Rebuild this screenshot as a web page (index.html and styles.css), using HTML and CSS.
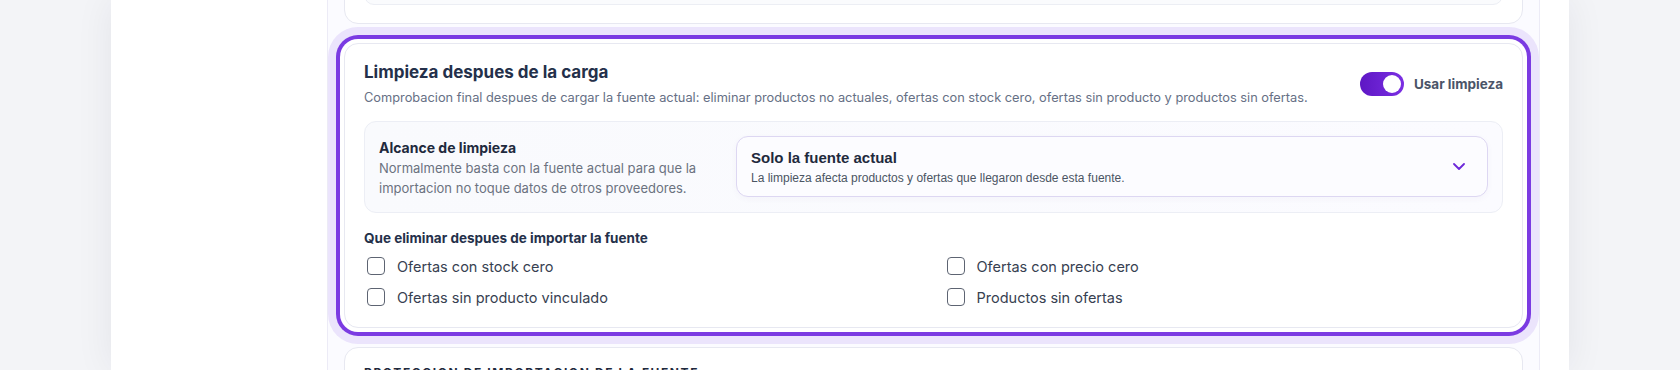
FILE: index.html
```html
<!DOCTYPE html>
<html lang="es">
  <head>
    <meta charset="UTF-8" />
    <meta name="viewport" content="width=device-width, initial-scale=1.0" />
    <title>Limpieza despues de la carga</title>
    <link rel="stylesheet" href="styles.css">
  </head>
  <body>
    <div class="panel">
      <div class="sidebar"></div>

      <div class="column">
        <div class="stack">
          <!-- tarjeta anterior, casi fuera de la vista -->
          <section class="card">
            <div class="inner-box"></div>
          </section>

          <section class="card active">
            <div class="card-head">
              <div>
                <h2 class="card-title">Limpieza despues de la carga</h2>
                <p class="card-text">Comprobacion final despues de cargar la fuente actual: eliminar productos no actuales, ofertas con stock cero, ofertas sin producto y productos sin ofertas.</p>
              </div>
              <label class="switch">
                <span class="track"><span class="knob"></span></span>
                <span class="switch-label">Usar limpieza</span>
              </label>
            </div>

            <div class="scope">
              <div class="scope-info">
                <h3>Alcance de limpieza</h3>
                <p>Normalmente basta con la fuente actual para que la importacion no toque datos de otros proveedores.</p>
              </div>
              <div class="select">
                <div>
                  <div class="select-value">Solo la fuente actual</div>
                  <div class="select-hint">La limpieza afecta productos y ofertas que llegaron desde esta fuente.</div>
                </div>
                <svg class="chevron" width="12" height="7" viewBox="0 0 12 7">
                  <path d="M1 1l5 5 5-5" fill="none" stroke="#6d28d9" stroke-width="1.8" stroke-linecap="round" stroke-linejoin="round"/>
                </svg>
              </div>
            </div>

            <h4 class="list-title">Que eliminar despues de importar la fuente</h4>
            <div class="checks">
              <label class="check"><span class="box"></span>Ofertas con stock cero</label>
              <label class="check"><span class="box"></span>Ofertas con precio cero</label>
              <label class="check"><span class="box"></span>Ofertas sin producto vinculado</label>
              <label class="check"><span class="box"></span>Productos sin ofertas</label>
            </div>
          </section>

          <section class="card">
            <h2 class="caps-title">Proteccion de importacion de la fuente</h2>
          </section>
        </div>
      </div>
    </div>
  </body>
</html>
```

FILE: styles.css
```css
* {
  margin: 0;
  padding: 0;
  box-sizing: border-box;
}
body {
  background: #f3f4f7;
  font-family: Inter, "Noto Sans", sans-serif;
  color: #1f2a3d;
  height: 370px;
  overflow: hidden;
}
.panel {
  width: 1458px;
  height: 370px;
  margin: 0 auto;
  background: #fff;
  display: flex;
  box-shadow: 0 0 36px rgba(20, 30, 60, 0.07);
}
.sidebar {
  width: 216px;
  flex-shrink: 0;
}
.column {
  width: 1213px;
  border-left: 1px solid #ecebf6;
  border-right: 1px solid #ecebf6;
  background: #fbfbff;
  padding: 0 16px;
  overflow: hidden;
}
.stack {
  display: flex;
  flex-direction: column;
  gap: 19px;
  margin-top: -76px;
}
.card {
  background: #fff;
  border: 1px solid #e7e8f1;
  border-radius: 14px;
  padding: 16px 19px 18px;
}
.inner-box {
  height: 64px;
  background: #fafbfd;
  border: 1px solid #eceef4;
  border-radius: 10px;
}
.active {
  box-shadow: 0 0 0 4px #fff, 0 0 0 8px #7b3be2, 0 0 0 16px #ebe4fc;
}
.card-head {
  display: flex;
  justify-content: space-between;
  align-items: center;
}
.card-title {
  font-size: 17px;
  line-height: 24px;
  font-weight: 700;
  color: #24304a;
}
.card-text {
  margin-top: 4px;
  font-size: 12.8px;
  line-height: 20px;
  color: #667085;
}
.switch {
  display: flex;
  align-items: center;
  gap: 10px;
}
.track {
  width: 44px;
  height: 24px;
  border-radius: 12px;
  background: linear-gradient(90deg, #5e17c4, #7b2fe3);
  display: flex;
  justify-content: flex-end;
  padding: 3px;
}
.knob {
  width: 18px;
  height: 18px;
  border-radius: 50%;
  background: #fff;
}
.switch-label {
  font-size: 13.5px;
  font-weight: 700;
  color: #4a5468;
}
.scope {
  margin-top: 13px;
  display: grid;
  grid-template-columns: 337px 1fr;
  gap: 20px;
  padding: 14px;
  background: linear-gradient(90deg, #f9fafd, #fbfbff);
  border: 1px solid #eceef5;
  border-radius: 12px;
}
.scope-info {
  padding-top: 2px;
}
.scope-info h3 {
  font-size: 14px;
  line-height: 20px;
  font-weight: 700;
  color: #1f2a3d;
}
.scope-info p {
  font-size: 13px;
  line-height: 20px;
  color: #6b7280;
}
.select {
  display: flex;
  justify-content: space-between;
  align-items: center;
  height: 61px;
  padding: 0 22px 0 14px;
  background: #fcfcff;
  border: 1px solid #ddd7f2;
  border-radius: 12px;
  box-shadow: 0 2px 6px rgba(90, 70, 160, 0.04);
  font-family: "Liberation Sans", Arial, sans-serif;
}
.select-value {
  font-size: 15px;
  line-height: 20px;
  font-weight: 700;
  color: #1f2a3d;
}
.select-hint {
  margin-top: 2px;
  font-size: 12px;
  line-height: 16px;
  color: #4b5563;
}
.list-title {
  margin-top: 15px;
  font-size: 13.5px;
  line-height: 20px;
  font-weight: 700;
  color: #24304a;
}
.checks {
  margin-top: 6px;
  display: grid;
  grid-template-columns: 1fr 1fr;
  column-gap: 20px;
  row-gap: 7px;
}
.check {
  display: flex;
  align-items: center;
  height: 24px;
  font-size: 14.5px;
  color: #374151;
}
.box {
  width: 18px;
  height: 18px;
  margin: 0 12px 0 3px;
  border: 1.5px solid #5d6472;
  border-radius: 4px;
  background: #fff;
}
.caps-title {
  font-size: 12px;
  line-height: 18px;
  font-weight: 700;
  letter-spacing: 1.6px;
  text-transform: uppercase;
  color: #1f2a3d;
}
```
